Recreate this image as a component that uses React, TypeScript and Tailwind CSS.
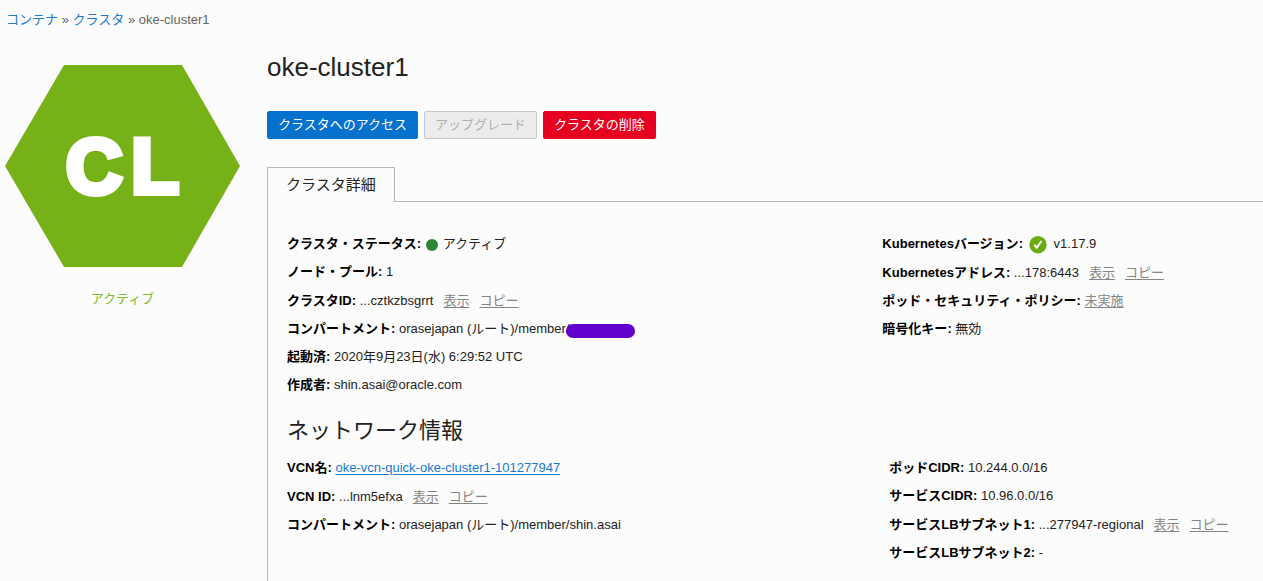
import { ReactNode } from "react";

const Row: React.FC<{ label: string; children: ReactNode }> = ({
  label,
  children,
}) => {
  return (
    <div className="leading-7 whitespace-nowrap">
      <dt className="inline font-bold text-black">{label}:</dt>{" "}
      <dd className="inline">{children}</dd>
    </div>
  );
};

const TextLink: React.FC<{ children: ReactNode }> = ({ children }) => {
  return (
    <a href="#" className="text-[#858585] underline underline-offset-2">
      {children}
    </a>
  );
};

// shortened id followed by the show / copy links
const HiddenValue: React.FC<{ value: string }> = ({ value }) => {
  return (
    <span className="inline-flex gap-[10px] pt-px">
      <span>...{value}</span>
      <TextLink>表示</TextLink>
      <TextLink>コピー</TextLink>
    </span>
  );
};

const CheckIcon = () => {
  return (
    <svg
      viewBox="0 0 18 18"
      className="inline-block size-[18px] align-middle ml-[2px] mr-[7px]"
      aria-hidden="true"
    >
      <circle cx="9" cy="8.7" r="8.7" fill="#6aac12" />
      <path
        d="M5.2 8.9l2.5 2.7 4.8-6.4"
        fill="none"
        stroke="#fff"
        strokeWidth="2.1"
      />
    </svg>
  );
};

const ClusterBadge = () => {
  return (
    <svg viewBox="0 0 235 202" className="block w-full" role="img">
      <polygon points="59,0 177,0 235,101 177,202 59,202 0,101" fill="#76b217" />
      <text
        x="61"
        y="128"
        fill="#fff"
        stroke="#fff"
        strokeWidth="6"
        className="font-['Liberation_Sans'] font-bold text-[78px]"
      >
        C<tspan dx="9">L</tspan>
      </text>
    </svg>
  );
};

const App = () => {
  return (
    <div className="min-h-screen flex flex-col bg-[#fcfcfc] text-[#222] text-[13px] font-['Liberation_Sans','Noto_Sans_CJK_JP',sans-serif]">
      <nav className="pt-[10px] pl-[6px] leading-5 text-[#666]">
        <a href="#" className="text-[#1a79d0]">
          コンテナ
        </a>{" "}
        »{" "}
        <a href="#" className="text-[#1a79d0]">
          クラスタ
        </a>{" "}
        » <span>oke-cluster1</span>
      </nav>

      <div className="flex flex-1">
        <aside className="w-[235px] shrink-0 ml-[5px] mr-[27px] pt-[35px]">
          <ClusterBadge />
          <p className="mt-5 text-center leading-6 text-[#7bb92c]">
            アクティブ
          </p>
        </aside>

        <main className="flex flex-1 flex-col min-w-0 pt-[17px]">
          <h1 className="text-[26px] leading-10">oke-cluster1</h1>

          <div className="flex gap-[6px] mt-6">
            <button className="h-7 px-[10px] border border-[#0572ce] rounded-[2px] bg-[#0572ce] text-white">
              クラスタへのアクセス
            </button>
            <button
              disabled
              className="h-7 px-[10px] border border-[#c4c8cc] rounded-[2px] bg-[#ececec] text-[#b0b0b0]"
            >
              アップグレード
            </button>
            <button className="h-7 px-[10px] border border-[#e6001f] rounded-[2px] bg-[#e6001f] text-white">
              クラスタの削除
            </button>
          </div>

          <div className="flex mt-7" role="tablist">
            <button
              role="tab"
              aria-selected="true"
              className="h-[35px] px-[18px] border border-b-0 border-[#b8b8b8] text-[15px]"
            >
              クラスタ詳細
            </button>
            <div className="flex-1 border-b border-[#b8b8b8]" />
          </div>

          <section className="flex-1 pt-7 pl-[19px] border-l border-[#b8b8b8]">
            <div className="grid grid-cols-[61fr_39fr]">
              <dl>
                <Row label="クラスタ・ステータス">
                  <span className="inline-block size-3 ml-px mr-[5px] rounded-full bg-[#2f8735] align-middle" />
                  アクティブ
                </Row>
                <Row label="ノード・プール">1</Row>
                <Row label="クラスタID">
                  <HiddenValue value="cztkzbsgrrt" />
                </Row>
                <Row label="コンパートメント">
                  orasejapan (ルート)/member/
                  <span className="relative inline-block leading-5">
                    shin.asai
                    <span className="absolute -left-[3px] top-[5px] w-[69px] h-[14px] rounded-full bg-[#6200cc]" />
                  </span>
                </Row>
                <Row label="起動済">2020年9月23日(水) 6:29:52 UTC</Row>
                <Row label="作成者">shin.asai@oracle.com</Row>
              </dl>
              <dl>
                <Row label="Kubernetesバージョン">
                  <CheckIcon />
                  v1.17.9
                </Row>
                <Row label="Kubernetesアドレス">
                  <HiddenValue value="178:6443" />
                </Row>
                <Row label="ポッド・セキュリティ・ポリシー">
                  <TextLink>未実施</TextLink>
                </Row>
                <Row label="暗号化キー">無効</Row>
              </dl>
            </div>

            <h2 className="mt-[9px] text-[22px] leading-[46px]">
              ネットワーク情報
            </h2>
            <div className="grid grid-cols-[617fr_383fr]">
              <dl>
                <Row label="VCN名">
                  <a
                    href="#"
                    className="text-[#1a79d0] underline underline-offset-2"
                  >
                    oke-vcn-quick-oke-cluster1-101277947
                  </a>
                </Row>
                <Row label="VCN ID">
                  <HiddenValue value="lnm5efxa" />
                </Row>
                <Row label="コンパートメント">
                  orasejapan (ルート)/member/shin.asai
                </Row>
              </dl>
              <dl>
                <Row label="ポッドCIDR">10.244.0.0/16</Row>
                <Row label="サービスCIDR">10.96.0.0/16</Row>
                <Row label="サービスLBサブネット1">
                  <HiddenValue value="277947-regional" />
                </Row>
                <Row label="サービスLBサブネット2">-</Row>
              </dl>
            </div>
          </section>
        </main>
      </div>
    </div>
  );
};

export default App;
